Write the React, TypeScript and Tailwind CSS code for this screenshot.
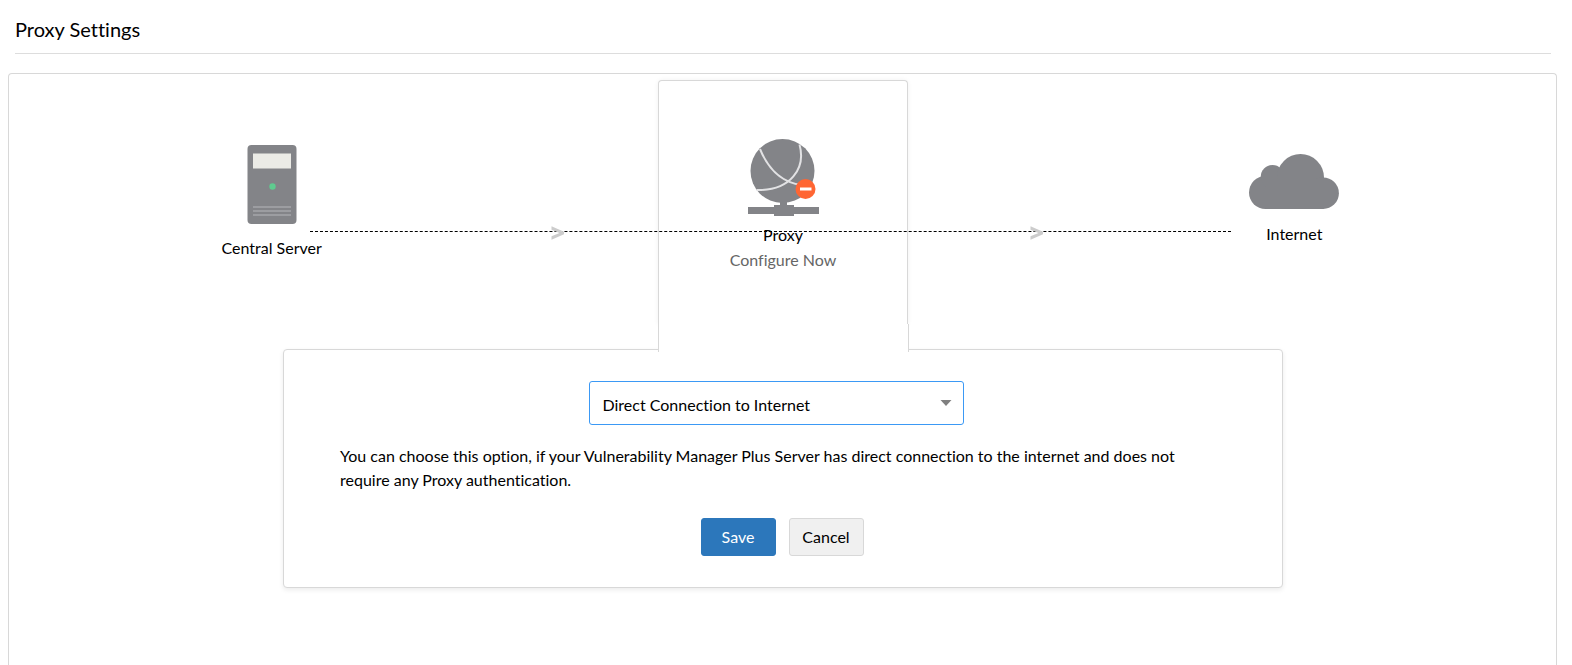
import { useState } from "react";

function ServerIcon() {
  return (
    <svg width="50" height="80" viewBox="0 0 50 80" aria-hidden="true">
      <rect x="0.5" y="0" width="49" height="79" rx="4" fill="#838488" />
      <rect x="6" y="8.500" width="38" height="15" fill="#ebebe6" />
      <circle cx="25.500" cy="41.500" r="3.200" fill="#5fcb8f" />
      <path d="M6 62H44M6 66H44M6 70H44" stroke="#9c9da1" strokeWidth="2" />
    </svg>
  );
}

function ProxyIcon() {
  return (
    <svg width="72" height="78" viewBox="0 0 72 78" aria-hidden="true">
      <circle cx="35.500" cy="32" r="32" fill="#838488" />
      <path
        d="M13 10C20 27 32 43 54.500 46M52.500 5.500C59 29 44 52 9.500 51"
        fill="none"
        stroke="#e2e2e4"
        strokeWidth="2"
      />
      <path
        d="M33 62H40V66H47V68H72V75H47V77H27V75H1V68H27V66H33Z"
        fill="#838488"
      />
      <circle cx="58.500" cy="50" r="10" fill="#ff6633" />
      <path d="M53 50H64.500" stroke="#fff" strokeWidth="3" />
    </svg>
  );
}

function CloudIcon() {
  return (
    <svg width="90" height="56" viewBox="0 0 90 56" fill="#838488" aria-hidden="true">
      <circle cx="16.500" cy="38.500" r="16.500" />
      <circle cx="23.500" cy="22.800" r="11.800" />
      <circle cx="51.500" cy="23.500" r="23.500" />
      <circle cx="74.100" cy="39.200" r="15.800" />
      <path d="M16.500 25H74.500V55H16.500Z" />
    </svg>
  );
}

function Arrow() {
  return (
    <svg width="14" height="14" viewBox="0 0 14 14" aria-hidden="true">
      <path d="M0.500 0.300L13 5.800V8.200L0.500 13.700V10.300L8.500 7L0.500 3.700Z" fill="#ccc" />
    </svg>
  );
}

export default function App() {
  const [mode, setMode] = useState("direct");

  return (
    <div className="flex h-screen flex-col overflow-hidden bg-white font-['Lato',sans-serif] text-base text-black [font-variant-ligatures:none]">
      <header className="mr-[21px] ml-[15px] border-b border-[#ddd] pt-[15px] pb-[10px]">
        <h1 className="text-xl leading-7">Proxy Settings</h1>
      </header>

      <main className="mt-[19px] mr-[15px] ml-2 flex-1 rounded-t border border-b-0 border-[#d8d8d8] pt-[6px] pr-[6px] pl-[7px]">
        <section className="relative grid grid-cols-3" aria-label="Connection path">
          <div className="flex flex-col items-center gap-[11px] pt-[65px]">
            <ServerIcon />
            <span>Central Server</span>
          </div>

          <div className="relative z-10 -mb-px flex justify-center">
            <div className="flex w-[250px] flex-col">
              <div className="flex h-[244px] flex-col items-center rounded-t border border-b-0 border-[#d8d8d8] bg-white pt-[58px] shadow-[0_0_5px_rgba(0,0,0,0.06)]">
                <ProxyIcon />
                <span className="mt-[6px]">Proxy</span>
                <a href="#configure" className="mt-px text-[#666]">
                  Configure Now
                </a>
              </div>
              <div className="-mr-px -mb-[2px] h-7 border-x border-[#d8d8d8] bg-white" />
            </div>
          </div>

          <div className="flex flex-col items-center gap-3 pt-[74px]">
            <CloudIcon />
            <span>Internet</span>
          </div>

          <div className="absolute top-[151px] right-[calc(16.667%+63px)] left-[calc(16.667%+38px)] z-20 border-t border-dashed border-black" />
          <div className="absolute top-[146px] left-[calc(35%-2px)] z-20">
            <Arrow />
          </div>
          <div className="absolute top-[146px] right-[33%] z-20">
            <Arrow />
          </div>
        </section>

        <section className="mx-auto flex max-w-[1000px] flex-col rounded border border-[#d8d8d8] bg-white py-[31px] pr-[58px] pl-14 shadow-[0_2px_5px_rgba(0,0,0,0.08)]">
          <div className="relative mr-3 w-[375px] max-w-full self-center">
            <select
              aria-label="Connection type"
              value={mode}
              onChange={(e) => setMode(e.target.value)}
              className="h-11 w-full appearance-none rounded-[3px] border border-[#3b99f5] bg-white pt-1 pr-10 pl-[13px] text-base text-black outline-none"
            >
              <option value="direct">Direct Connection to Internet</option>
              <option value="manual">Manual Proxy Configuration</option>
            </select>
            <svg
              className="pointer-events-none absolute top-[19px] right-3"
              width="12"
              height="6"
              viewBox="0 0 12 6"
              aria-hidden="true"
            >
              <path d="M0.500 0H11.500L6 6Z" fill="#808080" />
            </svg>
          </div>

          <p className="mt-[19px] leading-6">
            You can choose this option, if your Vulnerability Manager Plus Server has direct connection to the
            internet and does not require any Proxy authentication.
          </p>

          <div className="mt-[26px] flex justify-center gap-[13px]">
            <button type="button" className="h-[38px] w-[75px] rounded-[3px] border border-[#2c77bb] bg-[#2c77bb] text-white">
              Save
            </button>
            <button type="button" className="h-[38px] w-[75px] rounded-[3px] border border-[#d8d8d8] bg-[#f0f0f0]">
              Cancel
            </button>
          </div>
        </section>
      </main>
    </div>
  );
}
